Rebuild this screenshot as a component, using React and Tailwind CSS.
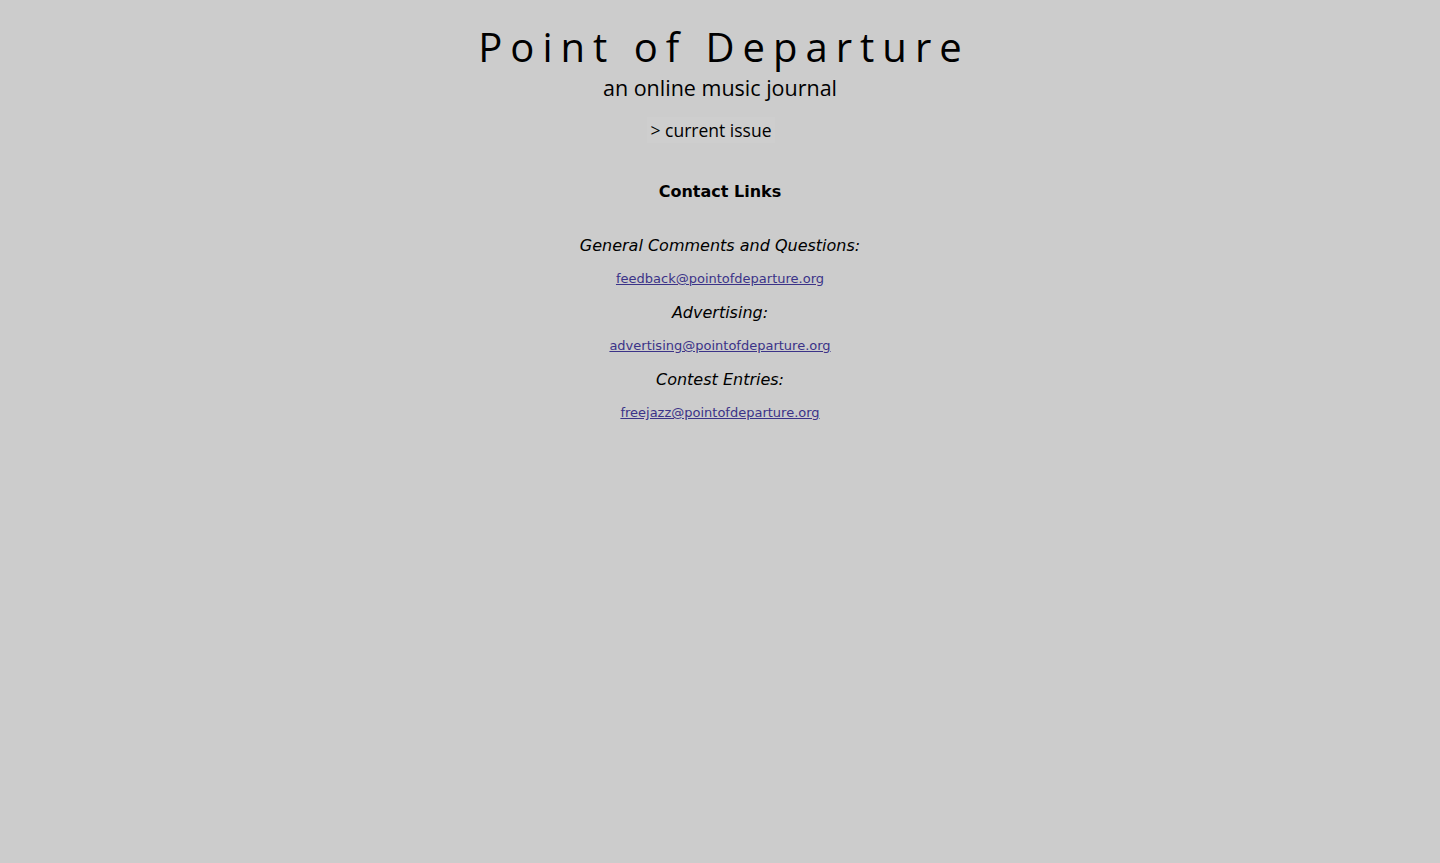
import React from 'react';

const contacts = [
  { label: 'General Comments and Questions:', email: 'feedback@pointofdeparture.org' },
  { label: 'Advertising:', email: 'advertising@pointofdeparture.org' },
  { label: 'Contest Entries:', email: 'freejazz@pointofdeparture.org' },
];

const App = () => {
  return (
    <div className="min-h-[863px] w-full bg-[#cccccc] text-black">
      {/* Masthead */}
      <div className="flex flex-col items-center pt-[22px] font-['Open_Sans',sans-serif]">
        <h1 className="text-[40px] leading-[50px] tracking-[8px] pl-[8px] font-normal">
          Point of Departure
        </h1>
        <div className="text-[21.5px] leading-[30px] mt-[1px]">an online music journal</div>
        <a href="#" className="mt-[14px] text-[17.5px] leading-[26px] text-black bg-[#cecece] px-[4px] mr-[18px]">
          &gt; current issue
        </a>
      </div>

      {/* Contacts */}
      <div className="flex flex-col items-center font-['DejaVu_Sans',Verdana,sans-serif] mt-[38px]">
        <h2 className="text-[16px] leading-[22px] font-bold">Contact Links</h2>
        <div className="flex flex-col items-center mt-[32px]">
          {contacts.map((c) => (
            <div key={c.email} className="flex flex-col items-center mb-[14px]">
              <div className="italic text-[16px] leading-[22px]">{c.label}</div>
              <a
                href={`mailto:${c.email}`}
                className="mt-[13px] text-[13px] leading-[18px] text-[#3b3388] underline"
              >
                {c.email}
              </a>
            </div>
          ))}
        </div>
      </div>
    </div>
  );
};

export default App;
